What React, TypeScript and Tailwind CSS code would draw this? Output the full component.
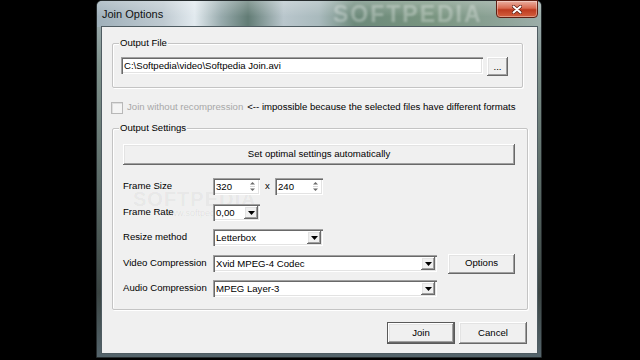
import React from "react";

const sunken =
  "bg-white shadow-[inset_1px_1px_#a0a0a0,inset_2px_2px_#696969,inset_-1px_-1px_#ffffff,inset_-2px_-2px_#e3e3e3]";
const raised =
  "bg-[#f0f0f0] shadow-[inset_-1px_-1px_#696969,inset_1px_1px_#ffffff,inset_-2px_-2px_#a0a0a0,inset_2px_2px_#e3e3e3]";

function GroupBox({ label, className, children }: { label: string; className: string; children: React.ReactNode }) {
  return (
    <div className={`relative rounded-[2px] border border-[#c4c4c4] shadow-[inset_1px_1px_#ffffff,1px_1px_#ffffff] ${className}`}>
      <span className="absolute -top-[7px] left-[6px] px-[1px] bg-[#f0f0f0] leading-[12px]">{label}</span>
      {children}
    </div>
  );
}

function DropArrow() {
  return (
    <div className={`${raised} w-[14px] h-full flex items-center justify-center`}>
      <svg width="7" height="4" viewBox="0 0 7 4">
        <path d="M0 0h7L3.5 4z" fill="#000" />
      </svg>
    </div>
  );
}

function Combo({ value, width }: { value: string; width: string }) {
  return (
    <div className={`${sunken} ${width} h-[17px] p-[2px] flex items-center`}>
      <span className="flex-1 pl-[1px] leading-[13px] whitespace-nowrap overflow-hidden">{value}</span>
      <DropArrow />
    </div>
  );
}

function Spin({ value, width }: { value: string; width: string }) {
  return (
    <div className={`${sunken} ${width} h-[17px] p-[2px] flex items-center`}>
      <span className="flex-1 pl-[1px] leading-[13px]">{value}</span>
      <div className="w-[12px] h-full flex items-center justify-center">
        <svg width="5" height="11" viewBox="0 0 5 11">
          <path d="M0 3.5h5L2.5 1z" fill="#6a6a6a" />
          <path d="M0 7.5h5L2.5 10z" fill="#6a6a6a" />
          <path d="M0 5.5h5" stroke="#d8d8d8" strokeWidth="1" />
        </svg>
      </div>
    </div>
  );
}

function Row({ label, mt, children }: { label: string; mt: string; children: React.ReactNode }) {
  return (
    <div className={`${mt} h-[17px] flex items-center`}>
      <span className="w-[90px] whitespace-nowrap">{label}</span>
      {children}
    </div>
  );
}

export default function App() {
  return (
    <div className="w-[640px] h-[360px] bg-black overflow-hidden font-['Liberation_Sans',Arial,sans-serif] text-[9.6px] text-black">
      <div className="ml-[96px] w-[446px] h-[358px] rounded-t-[6px] border border-[#262c2e] bg-[linear-gradient(180deg,#a8b6bc_0%,#7f928c_18%,#5c6c68_50%,#3a4442_82%,#55656c_100%)] flex flex-col">
        {/* title bar */}
        <div className="relative h-[26px] rounded-t-[5px] bg-[linear-gradient(90deg,#9fb0ba_0%,#bfcad1_15%,#e2eaef_22%,#98abad_28%,#627c75_34%,#b9c6cc_42%,#a9babd_50%,#6d8a7b_58%,#78947f_75%,#8ca296_90%,#9cada9_100%)]">
          <div className="absolute inset-0 rounded-t-[5px] bg-[linear-gradient(180deg,rgba(255,255,255,0.25)_0%,rgba(255,255,255,0)_60%)]" />
          <span className="absolute left-[236px] top-[1px] text-[23px] leading-[24px] font-bold tracking-[2px] text-white/30 blur-[1.2px]">
            SOFTPEDIA
          </span>
          <span className="absolute left-[5px] top-[6px] text-[11px] leading-[14px] text-[#111]">Join Options</span>
          <div className="absolute right-[3px] -top-[1px] w-[42px] h-[18px] rounded-b-[4px] border border-[#5e1e12] bg-[linear-gradient(180deg,#eab0a2_0%,#d86a50_45%,#bd3a1f_55%,#d4603f_100%)] shadow-[inset_0_0_0_1px_rgba(255,255,255,0.35)] flex items-center justify-center">
            <svg width="10" height="9" viewBox="0 0 10 9">
              <path d="M1.5 1.5l7 6M8.5 1.5l-7 6" stroke="#5a1a10" strokeWidth="3.4" strokeLinecap="round" />
              <path d="M1.5 1.5l7 6M8.5 1.5l-7 6" stroke="#ffffff" strokeWidth="2" strokeLinecap="round" />
            </svg>
          </div>
        </div>

        {/* client area */}
        <div className="relative ml-[5px] w-[435px] h-[326px] bg-[#f0f0f0] shadow-[0_0_0_1px_#4f5c62] flex flex-col">
          <span className="absolute left-[31px] top-[157px] text-[20px] font-bold tracking-[1px] text-black/[0.05] pointer-events-none">
            SOFTPEDIA
          </span>
          <span className="absolute left-[62px] top-[180px] text-[9px] text-black/[0.08] pointer-events-none">
            www.softpedia.com
          </span>

          <GroupBox label="Output File" className="ml-[10px] mt-[16px] w-[411px] h-[45px]">
            <div className="pt-[13px] pl-[8px] flex items-start gap-[4px]">
              <div className={`${sunken} w-[362px] h-[17px] px-[3px] flex items-center`}>
                <span className="leading-[13px]">C:\Softpedia\video\Softpedia Join.avi</span>
              </div>
              <button className={`${raised} w-[21px] h-[19px] flex items-center justify-center leading-none`}>...</button>
            </div>
          </GroupBox>

          <div className="mt-[13px] ml-[9px] h-[13px] flex items-center gap-[4px] whitespace-nowrap">
            <div className="w-[12px] h-[12px] border border-[#b8b8b8] bg-[#f4f4f4] shadow-[inset_1px_1px_#dedede]" />
            <span className="text-[#a8a8a8]">Join without recompression</span>
            <span>&lt;-- impossible because the selected files have different formats</span>
          </div>

          <GroupBox label="Output Settings" className="ml-[10px] mt-[14px] w-[416px] h-[182px]">
            <div className="pt-[15px] pl-[10px] flex flex-col">
              <button className={`${raised} w-[392px] h-[21px] flex items-center justify-center`}>
                Set optimal settings automatically
              </button>
              <Row label="Frame Size" mt="mt-[13px]">
                <Spin value="320" width="w-[47px]" />
                <span className="w-[15px] text-center">x</span>
                <Spin value="240" width="w-[48px]" />
              </Row>
              <Row label="Frame Rate" mt="mt-[9px]">
                <Combo value="0,00" width="w-[47px]" />
              </Row>
              <Row label="Resize method" mt="mt-[8px]">
                <Combo value="Letterbox" width="w-[110px]" />
              </Row>
              <Row label="Video Compression" mt="mt-[9px]">
                <Combo value="Xvid MPEG-4 Codec" width="w-[224px]" />
                <button className={`${raised} ml-[11px] w-[67px] h-[20px] flex items-center justify-center`}>Options</button>
              </Row>
              <Row label="Audio Compression" mt="mt-[8px]">
                <Combo value="MPEG Layer-3" width="w-[224px]" />
              </Row>
            </div>
          </GroupBox>

          <div className="mt-[12px] pr-[10px] flex justify-end gap-[4px]">
            <button className={`${raised} w-[68px] h-[22px] border border-[#5a5a5a] flex items-center justify-center`}>Join</button>
            <button className={`${raised} w-[68px] h-[22px] flex items-center justify-center`}>Cancel</button>
          </div>
        </div>
      </div>
    </div>
  );
}
